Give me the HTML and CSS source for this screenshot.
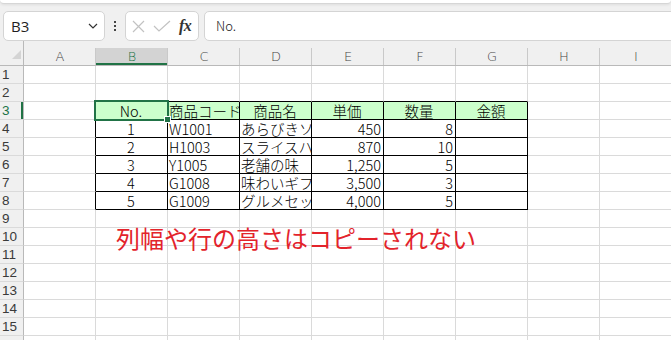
FILE: index.html
```html
<!DOCTYPE html>
<html lang="ja">
<head>
<meta charset="utf-8">
<title>Excel</title>
<link rel="stylesheet" href="styles.css">
</head>
<body>
<div class="ribbon"></div>
<div class="fbar">
  <div class="namebox"><span>B3</span><svg class="chev" width="10" height="6" viewBox="0 0 10 6"><path d="M1 1l4 4 4-4" fill="none" stroke="#333" stroke-width="1.2"/></svg></div>
  <div class="dots"><i></i><i></i><i></i></div>
  <div class="fxbox">
    <svg width="13" height="13" viewBox="0 0 13 13"><path d="M1 1L12 12M12 1L1 12" fill="none" stroke="#c2c2c2" stroke-width="1.2"/></svg>
    <svg width="18" height="12" viewBox="0 0 18 12"><path d="M1 6l5 5L17 1" fill="none" stroke="#c2c2c2" stroke-width="1.2"/></svg>
    <span class="fx">fx</span>
  </div>
  <div class="formula">No.</div>
</div>
<div class="sheet">
  <div class="ch corner"><svg width="9" height="9" viewBox="0 0 9 9"><path d="M9 0V9H0Z" fill="#d4d4d4"/></svg></div>
  <div class="ch">A</div><div class="ch sel">B</div><div class="ch">C</div><div class="ch">D</div><div class="ch">E</div><div class="ch">F</div><div class="ch">G</div><div class="ch">H</div><div class="ch">I</div>

  <div class="rh">1</div><div class="c"></div><div class="c"></div><div class="c"></div><div class="c"></div><div class="c"></div><div class="c"></div><div class="c"></div><div class="c"></div><div class="c"></div>
  <div class="rh">2</div><div class="c"></div><div class="c tb"></div><div class="c tb"></div><div class="c tb"></div><div class="c tb"></div><div class="c tb"></div><div class="c tb"></div><div class="c"></div><div class="c"></div>

  <div class="rh rsel">3</div><div class="c tr"></div><div class="c t hd active">No.</div><div class="c t hd l">商品コード</div><div class="c t hd">商品名</div><div class="c t hd">単価</div><div class="c t hd">数量</div><div class="c t hd">金額</div><div class="c"></div><div class="c"></div>
  <div class="rh">4</div><div class="c tr"></div><div class="c t m">1</div><div class="c t l">W1001</div><div class="c t l">あらびきソーセージ</div><div class="c t r">450</div><div class="c t r">8</div><div class="c t"></div><div class="c"></div><div class="c"></div>
  <div class="rh">5</div><div class="c tr"></div><div class="c t m">2</div><div class="c t l">H1003</div><div class="c t l">スライスハム</div><div class="c t r">870</div><div class="c t r">10</div><div class="c t"></div><div class="c"></div><div class="c"></div>
  <div class="rh">6</div><div class="c tr"></div><div class="c t m">3</div><div class="c t l">Y1005</div><div class="c t l">老舗の味</div><div class="c t r">1,250</div><div class="c t r">5</div><div class="c t"></div><div class="c"></div><div class="c"></div>
  <div class="rh">7</div><div class="c tr"></div><div class="c t m">4</div><div class="c t l">G1008</div><div class="c t l">味わいギフト</div><div class="c t r">3,500</div><div class="c t r">3</div><div class="c t"></div><div class="c"></div><div class="c"></div>
  <div class="rh">8</div><div class="c tr"></div><div class="c t m">5</div><div class="c t l">G1009</div><div class="c t l">グルメセット</div><div class="c t r">4,000</div><div class="c t r">5</div><div class="c t"></div><div class="c"></div><div class="c"></div>

  <div class="rh">9</div><div class="c"></div><div class="c"></div><div class="c"></div><div class="c"></div><div class="c"></div><div class="c"></div><div class="c"></div><div class="c"></div><div class="c"></div>
  <div class="rh">10</div><div class="c"></div><div class="c"></div><div class="c"></div><div class="c"></div><div class="c"></div><div class="c"></div><div class="c"></div><div class="c"></div><div class="c"></div>
  <div class="rh">11</div><div class="c"></div><div class="c"></div><div class="c"></div><div class="c"></div><div class="c"></div><div class="c"></div><div class="c"></div><div class="c"></div><div class="c"></div>
  <div class="rh">12</div><div class="c"></div><div class="c"></div><div class="c"></div><div class="c"></div><div class="c"></div><div class="c"></div><div class="c"></div><div class="c"></div><div class="c"></div>
  <div class="rh">13</div><div class="c"></div><div class="c"></div><div class="c"></div><div class="c"></div><div class="c"></div><div class="c"></div><div class="c"></div><div class="c"></div><div class="c"></div>
  <div class="rh">14</div><div class="c"></div><div class="c"></div><div class="c"></div><div class="c"></div><div class="c"></div><div class="c"></div><div class="c"></div><div class="c"></div><div class="c"></div>
  <div class="rh">15</div><div class="c"></div><div class="c"></div><div class="c"></div><div class="c"></div><div class="c"></div><div class="c"></div><div class="c"></div><div class="c"></div><div class="c"></div>
  <div class="rh">16</div><div class="c"></div><div class="c"></div><div class="c"></div><div class="c"></div><div class="c"></div><div class="c"></div><div class="c"></div><div class="c"></div><div class="c"></div>

  <div class="note">列幅や行の高さはコピーされない</div>
</div>
</body>
</html>
```

FILE: styles.css
```css
body {
  margin: 0;
  width: 671px;
  height: 340px;
  overflow: hidden;
  background: #f0f0f0;
  font-family: "Noto Sans CJK JP", sans-serif;
}

.ribbon {
  height: 3px;
  background: #fff;
  border-bottom: 1px solid #d6d6d6;
  border-radius: 0 0 6px 6px;
  box-shadow: 0 1px 3px rgba(0, 0, 0, 0.08);
}

.fbar {
  display: flex;
  align-items: center;
  height: 30px;
  margin-top: 7px;
  padding-left: 3px;
}

.namebox {
  box-sizing: border-box;
  width: 102px;
  height: 30px;
  background: #fff;
  border: 1px solid #d4d4d4;
  border-radius: 5px;
  display: flex;
  align-items: center;
  justify-content: space-between;
  padding: 0 6px 0 7px;
  font: 15px "Open Sans", "Noto Sans", sans-serif;
  color: #1f1f1f;
}

.dots {
  width: 20px;
  display: flex;
  flex-direction: column;
  align-items: center;
  gap: 2px;
}

.dots i {
  display: block;
  width: 2px;
  height: 2px;
  background: #444;
}

.fxbox {
  box-sizing: border-box;
  width: 74px;
  height: 30px;
  background: #fff;
  border: 1px solid #d4d4d4;
  border-radius: 5px;
  display: flex;
  align-items: center;
  gap: 8px;
  padding-left: 6px;
}

.fx {
  font: italic bold 16px "Liberation Serif", serif;
  color: #333;
  letter-spacing: -0.5px;
}

.formula {
  box-sizing: border-box;
  flex: 1;
  height: 30px;
  margin-left: 5px;
  margin-right: -10px;
  background: #fff;
  border: 1px solid #d4d4d4;
  border-radius: 5px;
  padding-left: 11px;
  font-size: 13px;
  font-weight: 300;
  line-height: 27px;
  color: #1a1a1a;
}

.sheet {
  position: relative;
  display: grid;
  grid-template-columns: 24px repeat(9, 72px);
  grid-template-rows: 25px;
  grid-auto-rows: 18px;
  background: #fff;
}

.ch {
  position: relative;
  box-sizing: border-box;
  background: #f0f0f0;
  border-bottom: 1px solid #b9b9b9;
  padding-top: 7px;
  text-align: center;
  font: 13px/17px "DejaVu Sans", sans-serif;
  font-weight: 300;
  color: #444;
}

.ch::after {
  content: "";
  position: absolute;
  right: 0;
  top: 7px;
  bottom: 0;
  width: 1px;
  background: #c9c9c9;
}

.ch.sel {
  color: #217346;
  box-shadow: inset 0 -2px 0 #217346, inset 0 7px 0 #f0f0f0;
  background: #d3d3d3;
}

.corner {
  display: flex;
  justify-content: flex-end;
  align-items: flex-end;
  padding: 0 3px 6px 0;
}

.corner::after {
  top: 0;
  background: #b9b9b9;
}

.rh {
  box-sizing: border-box;
  background: #f0f0f0;
  border-right: 1px solid #b9b9b9;
  border-bottom: 1px solid #dadada;
  padding-left: 2px;
  font: 13.5px/18px "Liberation Sans", sans-serif;
  color: #3a3a3a;
}

.rh.rsel {
  color: #217346;
  box-shadow: inset -2px 0 0 #217346;
}

.c {
  box-sizing: border-box;
  border-right: 1px solid #dadada;
  border-bottom: 1px solid #dadada;
  overflow: hidden;
  white-space: nowrap;
  font-size: 14.5px;
  font-weight: 300;
  line-height: 17px;
  padding: 0 2px 0 1px;
  color: #000;
}

.c.tb {
  border-bottom-color: #000;
}

.c.tr {
  border-right-color: #000;
}

.c.t {
  border-right-color: #000;
  border-bottom-color: #000;
}

.c.hd {
  background: #ccffcc;
  text-align: center;
}

.c.hd.l,
.c.l {
  text-align: left;
}

.c.m {
  text-align: center;
}

.c.r {
  text-align: right;
}

.c.active {
  position: relative;
  overflow: visible;
  z-index: 2;
}

.c.active::before {
  content: "";
  position: absolute;
  left: -2px;
  top: -2px;
  right: -2px;
  bottom: -2px;
  border: 2px solid #217346;
}

.c.active::after {
  content: "";
  position: absolute;
  left: 68px;
  top: 14px;
  width: 5px;
  height: 5px;
  background: #217346;
  border: 1px solid #fff;
}

.note {
  position: absolute;
  left: 116px;
  top: 185px;
  font-size: 24px;
  line-height: 24px;
  color: #e3232b;
  white-space: nowrap;
}
```
